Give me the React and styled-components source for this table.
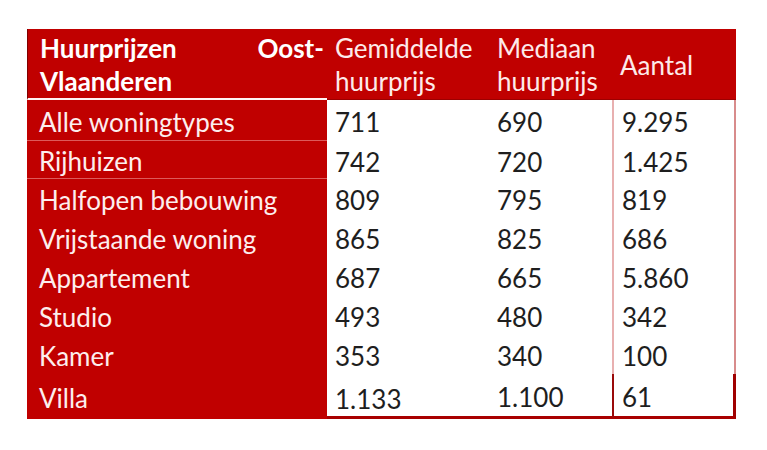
import React from 'react'
import styled, { createGlobalStyle } from 'styled-components'

const GlobalStyle = createGlobalStyle`
    html, body {
        margin: 0;
        padding: 0;
        background: #ffffff;
    }
    body {
        font-family: Lato, "Open Sans", "Liberation Sans", sans-serif;
    }
`
const Page = styled.div`
    width: 767px;
    height: 450px;
    padding: 29px 0 0 27px;
    box-sizing: border-box;
`
const Table = styled.div`
    display: grid;
    grid-template-columns: 300px 162px 123px 124px;
    grid-template-rows: 71px 41px 38px 39px 39px 39px 39px 39px 45px;
    width: 709px;
`
const HeadCell = styled.div`
    background: #c00000;
    color: #fdeaea;
    font-size: 26px;
    line-height: 33px;
    padding: 3px 8px 0 8px;
    display: flex;
    flex-direction: column;
    justify-content: ${p => p.$center ? 'center' : 'flex-start'};
    box-sizing: border-box;
    border-bottom: 1px solid #9c0000;
`
const TitleCell = styled(HeadCell)`
    color: #ffffff;
    font-weight: 700;
    padding: 3px 3px 0 12px;
    border-left: 1px solid #800000;
    border-bottom: 2px solid #fff4f4;
`
const TitleLine = styled.div`
    display: flex;
    justify-content: space-between;
`
const LabelCell = styled.div`
    background: #c00000;
    color: #fdeeee;
    font-size: 26px;
    display: flex;
    align-items: center;
    padding: 3px 12px 0 12px;
    box-sizing: border-box;
    border-bottom: 1px solid ${p => p.$line ? '#dd5a5a' : '#c00000'};
`
const ValueCell = styled.div`
    background: #ffffff;
    color: #1e1e1e;
    font-size: 26px;
    display: flex;
    align-items: center;
    padding: ${p => p.$low ? '8px' : '3px'} 8px 0 8px;
    box-sizing: border-box;
    border-left: ${p => p.$divider ? (p.$last ? '2px solid #9a0a0a' : '2px solid #e8b0b0') : 'none'};
    border-right: ${p => p.$edge ? (p.$last ? '3px solid #a00000' : '2px solid #d88c8c') : 'none'};
    border-bottom: ${p => p.$last ? '3px solid #a80000' : 'none'};
`

const rows = [
    ['Alle woningtypes', '711', '690', '9.295'],
    ['Rijhuizen', '742', '720', '1.425'],
    ['Halfopen bebouwing', '809', '795', '819'],
    ['Vrijstaande woning', '865', '825', '686'],
    ['Appartement', '687', '665', '5.860'],
    ['Studio', '493', '480', '342'],
    ['Kamer', '353', '340', '100'],
    ['Villa', '1.133', '1.100', '61'],
]

const App = () => {
    return (
        <Page>
            <GlobalStyle />
            <Table>
                <TitleCell>
                    <TitleLine><span>Huurprijzen</span><span>Oost-</span></TitleLine>
                    <div>Vlaanderen</div>
                </TitleCell>
                <HeadCell>
                    <div>Gemiddelde</div>
                    <div>huurprijs</div>
                </HeadCell>
                <HeadCell>
                    <div>Mediaan</div>
                    <div>huurprijs</div>
                </HeadCell>
                <HeadCell $center>Aantal</HeadCell>
                {rows.map((r, i) => {
                    const last = i === rows.length - 1
                    return (
                        <React.Fragment key={r[0]}>
                            <LabelCell $line={i < 2}>{r[0]}</LabelCell>
                            <ValueCell $last={last} $low={last}>{r[1]}</ValueCell>
                            <ValueCell $last={last}>{r[2]}</ValueCell>
                            <ValueCell $last={last} $divider $edge>{r[3]}</ValueCell>
                        </React.Fragment>
                    )
                })}
            </Table>
        </Page>
    )
}

export default App
